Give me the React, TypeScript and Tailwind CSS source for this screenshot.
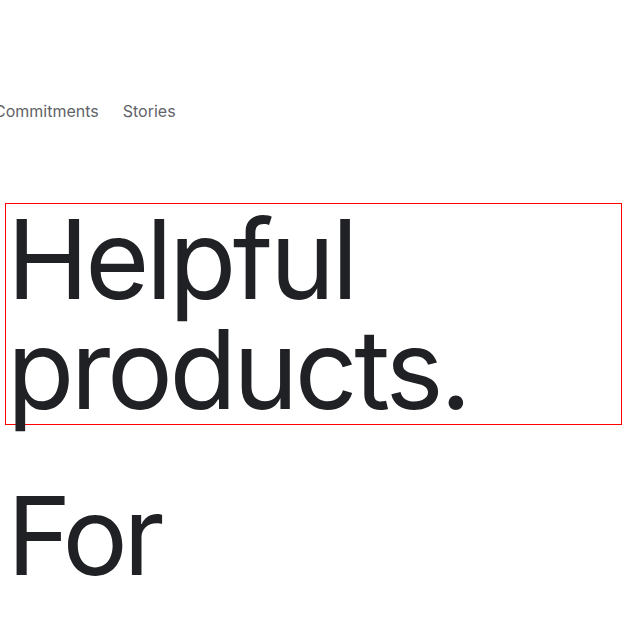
import React from 'react';

const navItems = ['Commitments', 'Stories'];

export default function App() {
  return (
    <div className="w-[626px] h-[626px] overflow-hidden bg-white text-[#202124]" style={{ fontFamily: 'Inter, "Open Sans", sans-serif' }}>
      {/* Top nav, scrolled so the first item is cut */}
      <nav className="flex gap-6 pt-[101px] -ml-[6px] text-[16px] text-[#5f6368] whitespace-nowrap">
        {navItems.map((item) => (
          <span key={item} className="leading-5">{item}</span>
        ))}
      </nav>

      {/* Headline */}
      <div className="mt-[82px] pl-[5px] pr-[4px]">
        <h1 className="border border-[#ff0000] text-[110px] leading-[110px] tracking-[-3.5px] font-normal pl-[1px]">
          Helpful
          <br />
          products.
        </h1>
        <div className="mt-[55px] text-[109px] leading-[110px] tracking-[-4.5px] pl-[2px]">For</div>
      </div>
    </div>
  );
}
